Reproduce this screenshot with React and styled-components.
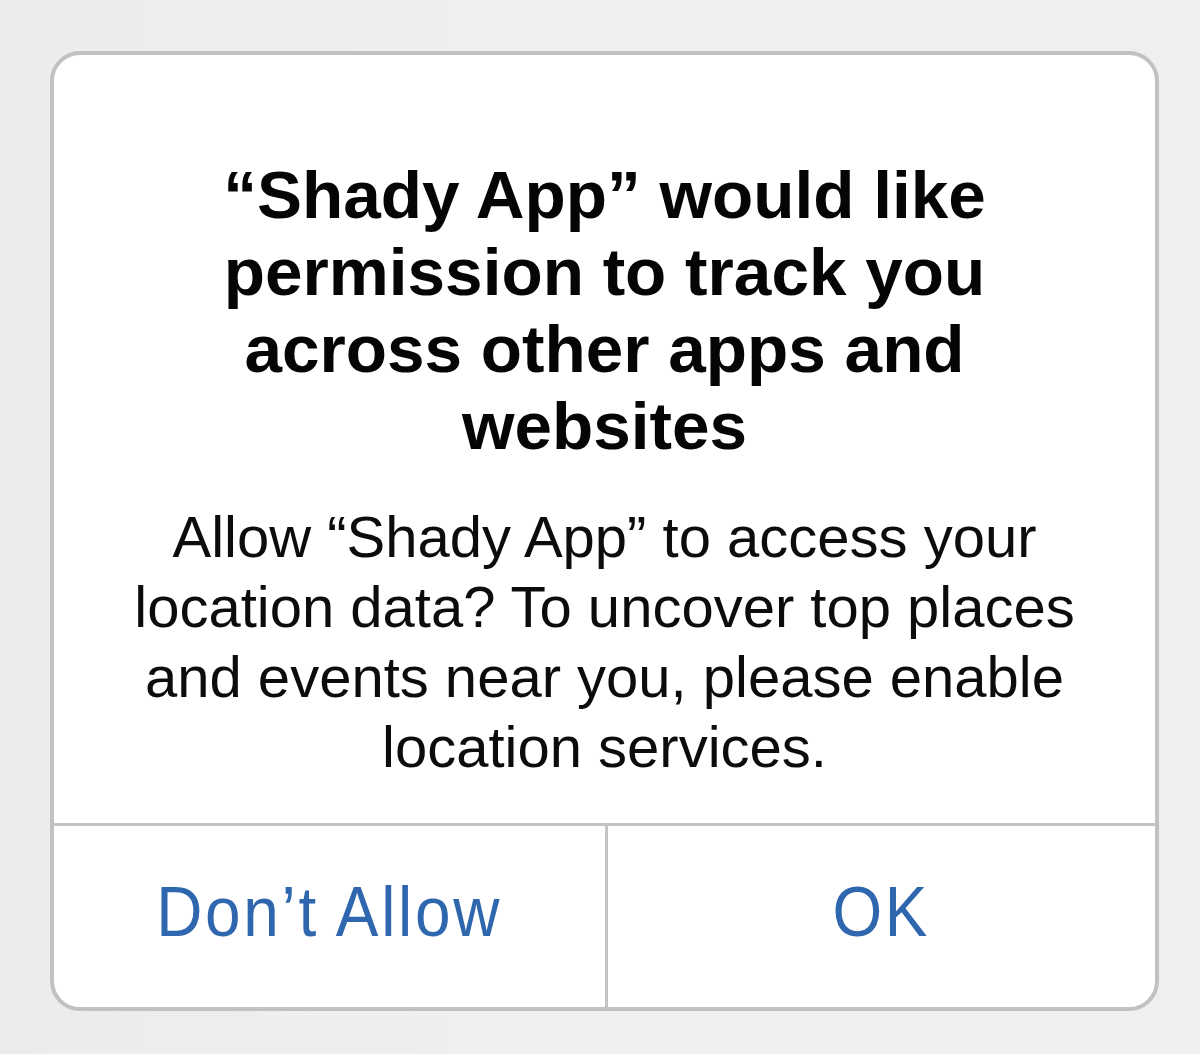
import React from "react";
import styled, { createGlobalStyle } from "styled-components";

const GlobalStyle = createGlobalStyle`
  html, body {
    margin: 0;
    padding: 0;
    background: #efeff0;
  }
  body {
    font-family: "Liberation Sans", Arial, sans-serif;
  }
`;

export default function App() {
  return (
    <>
      <GlobalStyle />
      <Screen>
        <AlertCard role="alertdialog" aria-labelledby="alert-title">
          <AlertBody>
            <Title id="alert-title">
              “Shady App” would like permission to track you across other apps
              and websites
            </Title>
            <Message>
              Allow “Shady App” to access your location data? To uncover top
              places and events near you, please enable location services.
            </Message>
          </AlertBody>
          <ActionRow>
            <ActionButton>
              <ActionLabel>Don’t Allow</ActionLabel>
            </ActionButton>
            <ActionButton divider>
              <ActionLabel>OK</ActionLabel>
            </ActionButton>
          </ActionRow>
        </AlertCard>
      </Screen>
    </>
  );
}

const Screen = styled.div`
  box-sizing: border-box;
  width: 1200px;
  height: 1054px;
  padding: 51px 41px 43px 50px;
  display: flex;
  background: linear-gradient(90deg, #ececed 0%, #f0f0f1 50%, #efeff0 100%);
`;

const AlertCard = styled.div`
  flex: 1;
  display: flex;
  flex-direction: column;
  background: #ffffff;
  border: 4px solid #c1c1c3;
  border-radius: 30px;
  overflow: hidden;
`;

const AlertBody = styled.div`
  display: flex;
  flex-direction: column;
  align-items: center;
  gap: 38px;
  padding: 101px 40px 41px;
  text-align: center;
`;

const Title = styled.h1`
  margin: 0;
  max-width: 790px;
  font-family: "Liberation Sans", Arial, sans-serif;
  font-size: 67.5px;
  line-height: 77px;
  font-weight: 700;
  color: #050505;
`;

const Message = styled.p`
  margin: 0;
  max-width: 980px;
  font-family: "Liberation Sans", Arial, sans-serif;
  font-size: 58px;
  line-height: 70px;
  font-weight: 400;
  color: #0c0c0c;
`;

const ActionRow = styled.div`
  flex: 1;
  display: grid;
  grid-template-columns: 1fr 1fr;
  border-top: 3px solid #c4c4c6;
`;

const ActionButton = styled.button`
  display: flex;
  align-items: center;
  justify-content: center;
  padding: 0 0 10px;
  border: none;
  border-left: ${(p) => (p.divider ? "3px solid #c4c4c6" : "none")};
  background: transparent;
  cursor: pointer;
`;

/* the system button face is a little condensed, so squeeze Liberation Sans */
const ActionLabel = styled.span`
  display: inline-block;
  font-family: "Liberation Sans", Arial, sans-serif;
  font-size: 71px;
  letter-spacing: 3px;
  color: #2f67af;
  transform: scaleX(0.9);
`;
